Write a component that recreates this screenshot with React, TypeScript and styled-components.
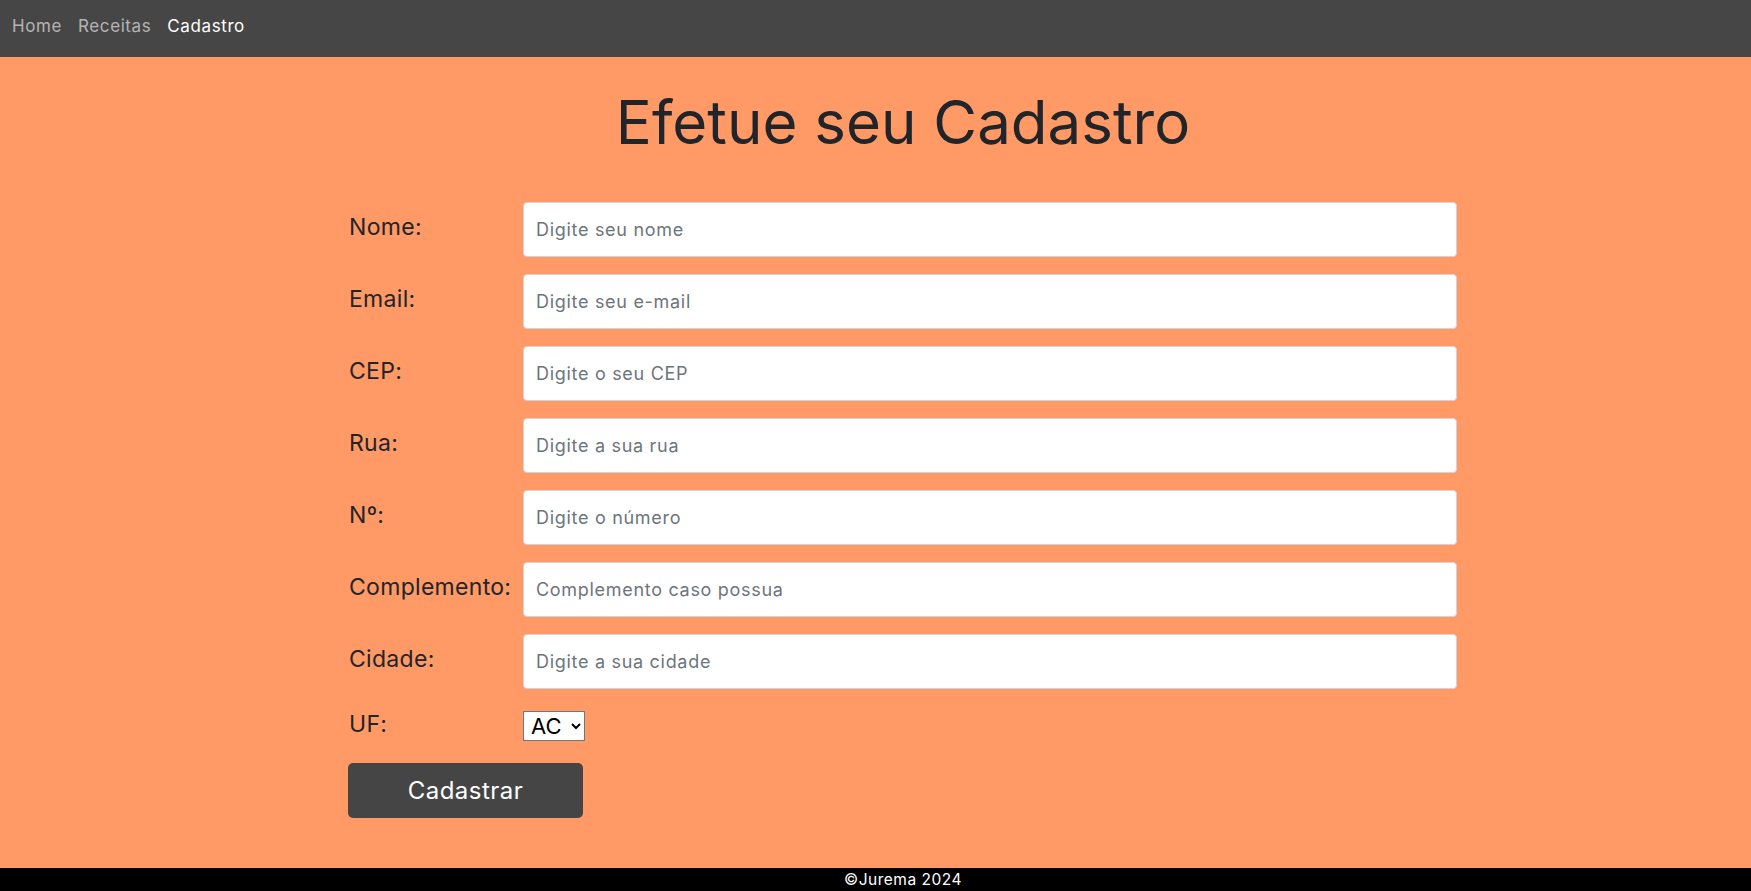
import React from "react";
import styled, { createGlobalStyle } from "styled-components";

const GlobalStyle = createGlobalStyle`
  html, body {
    margin: 0;
    padding: 0;
  }
  body {
    font-family: Inter, "Open Sans", sans-serif;
    background: #ff9966;
    color: #212529;
  }
  * { box-sizing: border-box; }
`;

const Page = styled.div`
  min-height: 100vh;
  display: flex;
  flex-direction: column;
`;

const NavBar = styled.nav`
  height: 57px;
  background: #464646;
  display: flex;
  align-items: flex-start;
  padding: 6px 4px 0;
`;

const NavLink = styled.a<{ $active?: boolean }>`
  font-size: 17px;
  letter-spacing: 0.6px;
  line-height: 24px;
  padding: 8px 8px;
  color: ${(p) => (p.$active ? "#ffffff" : "rgba(255,255,255,0.6)")};
  text-decoration: none;
  cursor: pointer;
`;

const Main = styled.main`
  flex: 1;
  padding: 0 0 50px 55px;
`;

const Container = styled.div`
  max-width: 1108px;
  margin: 0 auto;
`;

const Title = styled.h1`
  margin: 29px 0 44px;
  font-size: 60px;
  line-height: 72px;
  font-weight: 400;
  text-align: center;
  color: #212529;
`;

const Form = styled.form`
  display: flex;
  flex-direction: column;
  gap: 17px;
`;

const Row = styled.div`
  display: grid;
  grid-template-columns: 174px 1fr;
  align-items: start;
`;

const Label = styled.label<{ $tight?: boolean }>`
  font-size: 23px;
  letter-spacing: 0.3px;
  line-height: 1.5;
  padding-top: ${(p) => (p.$tight ? "1px" : "7.5px")};
  color: #212529;
  white-space: nowrap;
`;

const Input = styled.input`
  height: 55px;
  width: 100%;
  border: 1px solid #ced4da;
  border-radius: 4px;
  background: #ffffff;
  padding: 0 12px;
  font-family: Inter, "Open Sans", sans-serif;
  font-size: 18px;
  letter-spacing: 0.7px;
  color: #212529;
  outline: none;
  &::placeholder {
    color: #6c757d;
    opacity: 1;
  }
`;

const Select = styled.select`
  margin-top: 5px;
  width: 62px;
  height: 30px;
  font-family: Inter, "Open Sans", sans-serif;
  font-size: 22px;
  color: #000;
  background: #ffffff;
  border: 1px solid #767676;
  border-radius: 0;
  padding: 0 0 0 3px;
`;

const Button = styled.button`
  margin-top: 4px;
  width: 235px;
  height: 55px;
  background: #454545;
  color: #ffffff;
  border: none;
  border-radius: 5px;
  font-family: Inter, "Open Sans", sans-serif;
  font-size: 24px;
  letter-spacing: 0.5px;
  cursor: pointer;
  align-self: flex-start;
  margin-left: -1px;
`;

const Footer = styled.footer`
  height: 23px;
  background: #000;
  color: #fff;
  padding-left: 55px;
  display: flex;
  justify-content: center;
  align-items: center;
  font-size: 15.5px;
  letter-spacing: 0.5px;
`;

const fields = [
  { id: "nome", label: "Nome:", placeholder: "Digite seu nome", type: "text" },
  { id: "email", label: "Email:", placeholder: "Digite seu e-mail", type: "email" },
  { id: "cep", label: "CEP:", placeholder: "Digite o seu CEP", type: "text" },
  { id: "rua", label: "Rua:", placeholder: "Digite a sua rua", type: "text" },
  { id: "numero", label: "Nº:", placeholder: "Digite o número", type: "text" },
  { id: "complemento", label: "Complemento:", placeholder: "Complemento caso possua", type: "text" },
  { id: "cidade", label: "Cidade:", placeholder: "Digite a sua cidade", type: "text" },
];

const ufs = ["AC", "AL", "AP", "AM", "BA", "CE", "DF", "ES", "GO", "MA", "MT", "MS", "MG", "PA", "PB", "PR", "PE", "PI", "RJ", "RN", "RS", "RO", "RR", "SC", "SP", "SE", "TO"];

export default function App() {
  return (
    <Page>
      <GlobalStyle />
      <NavBar>
        <NavLink>Home</NavLink>
        <NavLink>Receitas</NavLink>
        <NavLink $active>Cadastro</NavLink>
      </NavBar>
      <Main>
        <Container>
          <Title>Efetue seu Cadastro</Title>
          <Form onSubmit={(e) => e.preventDefault()}>
            {fields.map((f) => (
              <Row key={f.id}>
                <Label htmlFor={f.id}>{f.label}</Label>
                <Input id={f.id} type={f.type} placeholder={f.placeholder} />
              </Row>
            ))}
            <Row>
              <Label htmlFor="uf" $tight>UF:</Label>
              <Select id="uf" defaultValue="AC">
                {ufs.map((u) => (
                  <option key={u} value={u}>{u}</option>
                ))}
              </Select>
            </Row>
            <Button type="submit">Cadastrar</Button>
          </Form>
        </Container>
      </Main>
      <Footer>©Jurema 2024</Footer>
    </Page>
  );
}
